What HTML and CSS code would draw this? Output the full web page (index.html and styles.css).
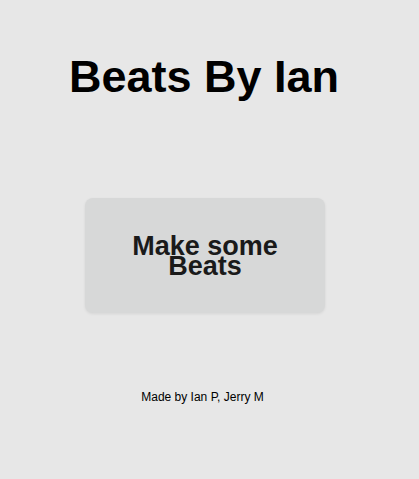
FILE: index.html
```html
<!DOCTYPE html>
<html>
<head>
<meta charset="utf-8">
<link rel="stylesheet" href="styles.css">
</head>
<body>
<main class="page">
  <h1 class="title">Beats By Ian</h1>
  <button class="cta">Make some Beats</button>
  <footer class="credit">Made by Ian P, Jerry M</footer>
</main>
</body>
</html>
```

FILE: styles.css
```css
html, body {
  margin: 0;
  padding: 0;
  background: #e7e7e7;
  font-family: "Liberation Sans", Arial, sans-serif;
}
.page {
  display: flex;
  flex-direction: column;
  align-items: center;
  width: 408px;
  padding-top: 49px;
}
.title {
  margin: 0;
  font-size: 45px;
  line-height: 55px;
  font-weight: bold;
  color: #000;
}
.cta {
  margin-top: 94px;
  margin-left: 2px;
  width: 240px;
  height: 115px;
  border: none;
  border-radius: 8px;
  background: #d7d8d8;
  box-shadow: 0 1px 3px rgba(0,0,0,0.08);
  font-family: "Liberation Sans", Arial, sans-serif;
  font-size: 27px;
  font-weight: bold;
  line-height: 20px;
  color: #1a1a1a;
  padding: 0 40px;
}
.credit {
  margin-top: 77px;
  margin-right: 3px;
  font-size: 12px;
  color: #000;
}
```
